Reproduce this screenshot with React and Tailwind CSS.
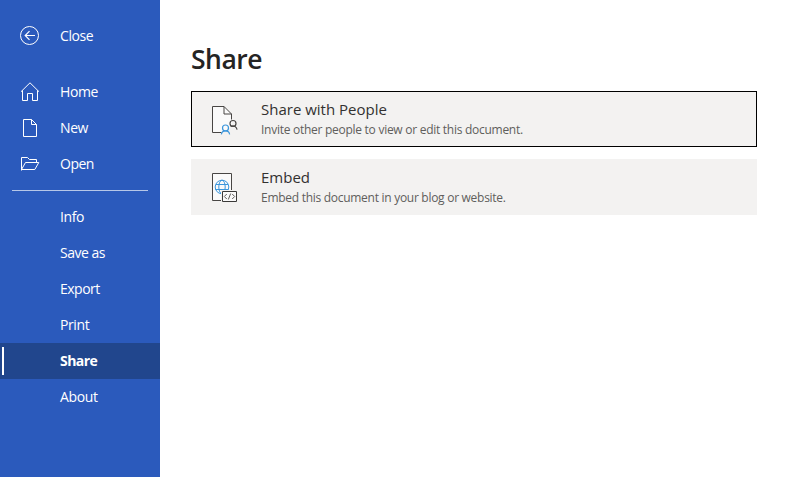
const primary = [
  { label: 'Home', icon: HomeIcon, tracking: 'tracking-[-0.4px]' },
  { label: 'New', icon: PageIcon, tracking: 'tracking-[-0.4px]' },
  { label: 'Open', icon: FolderIcon, tracking: 'tracking-[-0.5px]' },
];

const secondary = [
  { label: 'Info', tracking: 'tracking-[-0.4px]' },
  { label: 'Save as', tracking: 'tracking-[-0.5px]' },
  { label: 'Export', tracking: 'tracking-[-0.5px]' },
  { label: 'Print', tracking: 'tracking-[-0.4px]' },
  { label: 'Share', tracking: 'tracking-[-0.55px]', active: true },
  { label: 'About', tracking: 'tracking-[-0.35px]' },
];

function Icon({ children }) {
  return (
    <svg className="block h-5 w-5" viewBox="0 0 20 20" fill="none" stroke="white" strokeWidth="1">
      {children}
    </svg>
  );
}

function BackIcon() {
  return (
    <Icon>
      <circle cx="9.5" cy="9.5" r="9" />
      <path d="M15 9.5H5.2M9.5 5.2L5.2 9.5l4.3 4.3" strokeWidth="1.2" />
    </Icon>
  );
}

function HomeIcon() {
  return (
    <Icon>
      <path d="M1 9.7L10 0.8l9 8.9M2.5 8.3v10.2h5v-7h5v7h5V8.3" />
    </Icon>
  );
}

function PageIcon() {
  return (
    <Icon>
      <path d="M3.5 1.5h8l5 5v12h-13zM11.5 1.5v5h5" />
    </Icon>
  );
}

function FolderIcon() {
  return (
    <Icon>
      <path d="M1.5 16.5v-13h6l2 2h7v3M1.5 15.5l4-7h13.3l-4 7H1.5" />
    </Icon>
  );
}

function PeoplePageIcon() {
  return (
    <svg className="block h-10 w-10" viewBox="0 0 40 40" fill="none">
      <path d="M7 8h12l8 8v11l-6 7H7z" fill="#fafafa" />
      <path d="M16.5 34.5h-9v-26h11.5l7.5 7.5v5.5M19 8.5v7.5h7.5" stroke="#484644" />
      <circle cx="28" cy="25.5" r="3" stroke="#484644" strokeWidth="1.2" />
      <path d="M25.7 28.4c1.5-.6 3.1-.6 4.3 0 1.2.7 1.8 1.8 2.1 3.2" stroke="#484644" strokeWidth="1.2" />
      <circle cx="20.5" cy="30" r="3" stroke="#3b96dc" strokeWidth="1.2" />
      <path d="M16.4 36.3c.3-2.2 1.9-3.4 4.1-3.4s3.8 1.2 4.1 3.4" stroke="#3b96dc" strokeWidth="1.2" />
    </svg>
  );
}

function EmbedIcon() {
  return (
    <svg className="block h-10 w-10" viewBox="0 0 40 40" fill="none">
      <path d="M7.5 7.5h19v27h-19z" fill="#fafafa" stroke="#484644" />
      <g stroke="#3b96dc">
        <circle cx="17" cy="21" r="6.8" />
        <ellipse cx="17" cy="21" rx="3.2" ry="6.8" />
        <path d="M11 18.5h12M10.3 23.5h13" />
      </g>
      <path d="M16 24h18v14H16z" fill="#f3f2f1" />
      <path d="M17.5 25.5h14v10h-14z" fill="#fafafa" stroke="#3b3a39" />
      <path d="M21.8 28l-2.5 2.5 2.5 2.5M27.2 28l2.5 2.5-2.5 2.5M25.7 27.5l-2.4 6" stroke="#605e5c" />
    </svg>
  );
}

function NavItem({ label, icon: Glyph, tracking, active }) {
  return (
    <button
      className={`flex h-9 w-full items-center text-left text-sm leading-5 text-white ${
        active ? 'bg-[#21468d] font-bold' : 'font-medium'
      }`}
    >
      <span className={`ml-0.5 h-7 w-0.5 ${active ? 'bg-white' : ''}`} />
      <span className="ml-4 w-10">{Glyph && <Glyph />}</span>
      <span className={tracking}>{label}</span>
    </button>
  );
}

function Card({ icon, title, titleTracking, text, textTracking, selected }) {
  return (
    <button
      className={`flex h-14 w-[566px] border bg-[#f3f2f1] text-left ${
        selected ? 'border-black' : 'border-[#f3f2f1]'
      }`}
    >
      <span className="ml-[13px] mt-[6px] w-14">{icon}</span>
      <span className="flex flex-col pt-[6px]">
        <span className={`text-[15px] leading-[22px] text-[#323130] ${titleTracking}`}>{title}</span>
        <span className={`pt-px text-xs leading-[18px] text-[#605e5c] ${textTracking}`}>{text}</span>
      </span>
    </button>
  );
}

export default function App() {
  return (
    <div className="flex h-[477px] w-[802px] overflow-hidden bg-white font-['Open_Sans',sans-serif]">
      <nav className="w-40 shrink-0 bg-[#2b5abc] pt-[18px]">
        <NavItem label="Close" icon={BackIcon} tracking="tracking-[-0.4px]" />
        <div className="pt-5">
          {primary.map((item) => (
            <NavItem key={item.label} {...item} />
          ))}
        </div>
        <div className="mx-3 mb-2 mt-2 h-px bg-[#b6c7e8]" />
        {secondary.map((item) => (
          <NavItem key={item.label} {...item} />
        ))}
      </nav>
      <main className="pl-[31px] pt-[41px]">
        <h1 className="text-[26.5px] font-semibold leading-9 tracking-[-0.5px] text-[#252423]">Share</h1>
        <div className="mt-[14px] flex flex-col gap-3">
          <Card
            selected
            icon={<PeoplePageIcon />}
            title="Share with People"
            titleTracking="tracking-[0px]"
            text="Invite other people to view or edit this document."
            textTracking="tracking-[-0.27px]"
          />
          <Card
            icon={<EmbedIcon />}
            title="Embed"
            titleTracking="tracking-[0px]"
            text="Embed this document in your blog or website."
            textTracking="tracking-[-0.28px]"
          />
        </div>
      </main>
    </div>
  );
}
